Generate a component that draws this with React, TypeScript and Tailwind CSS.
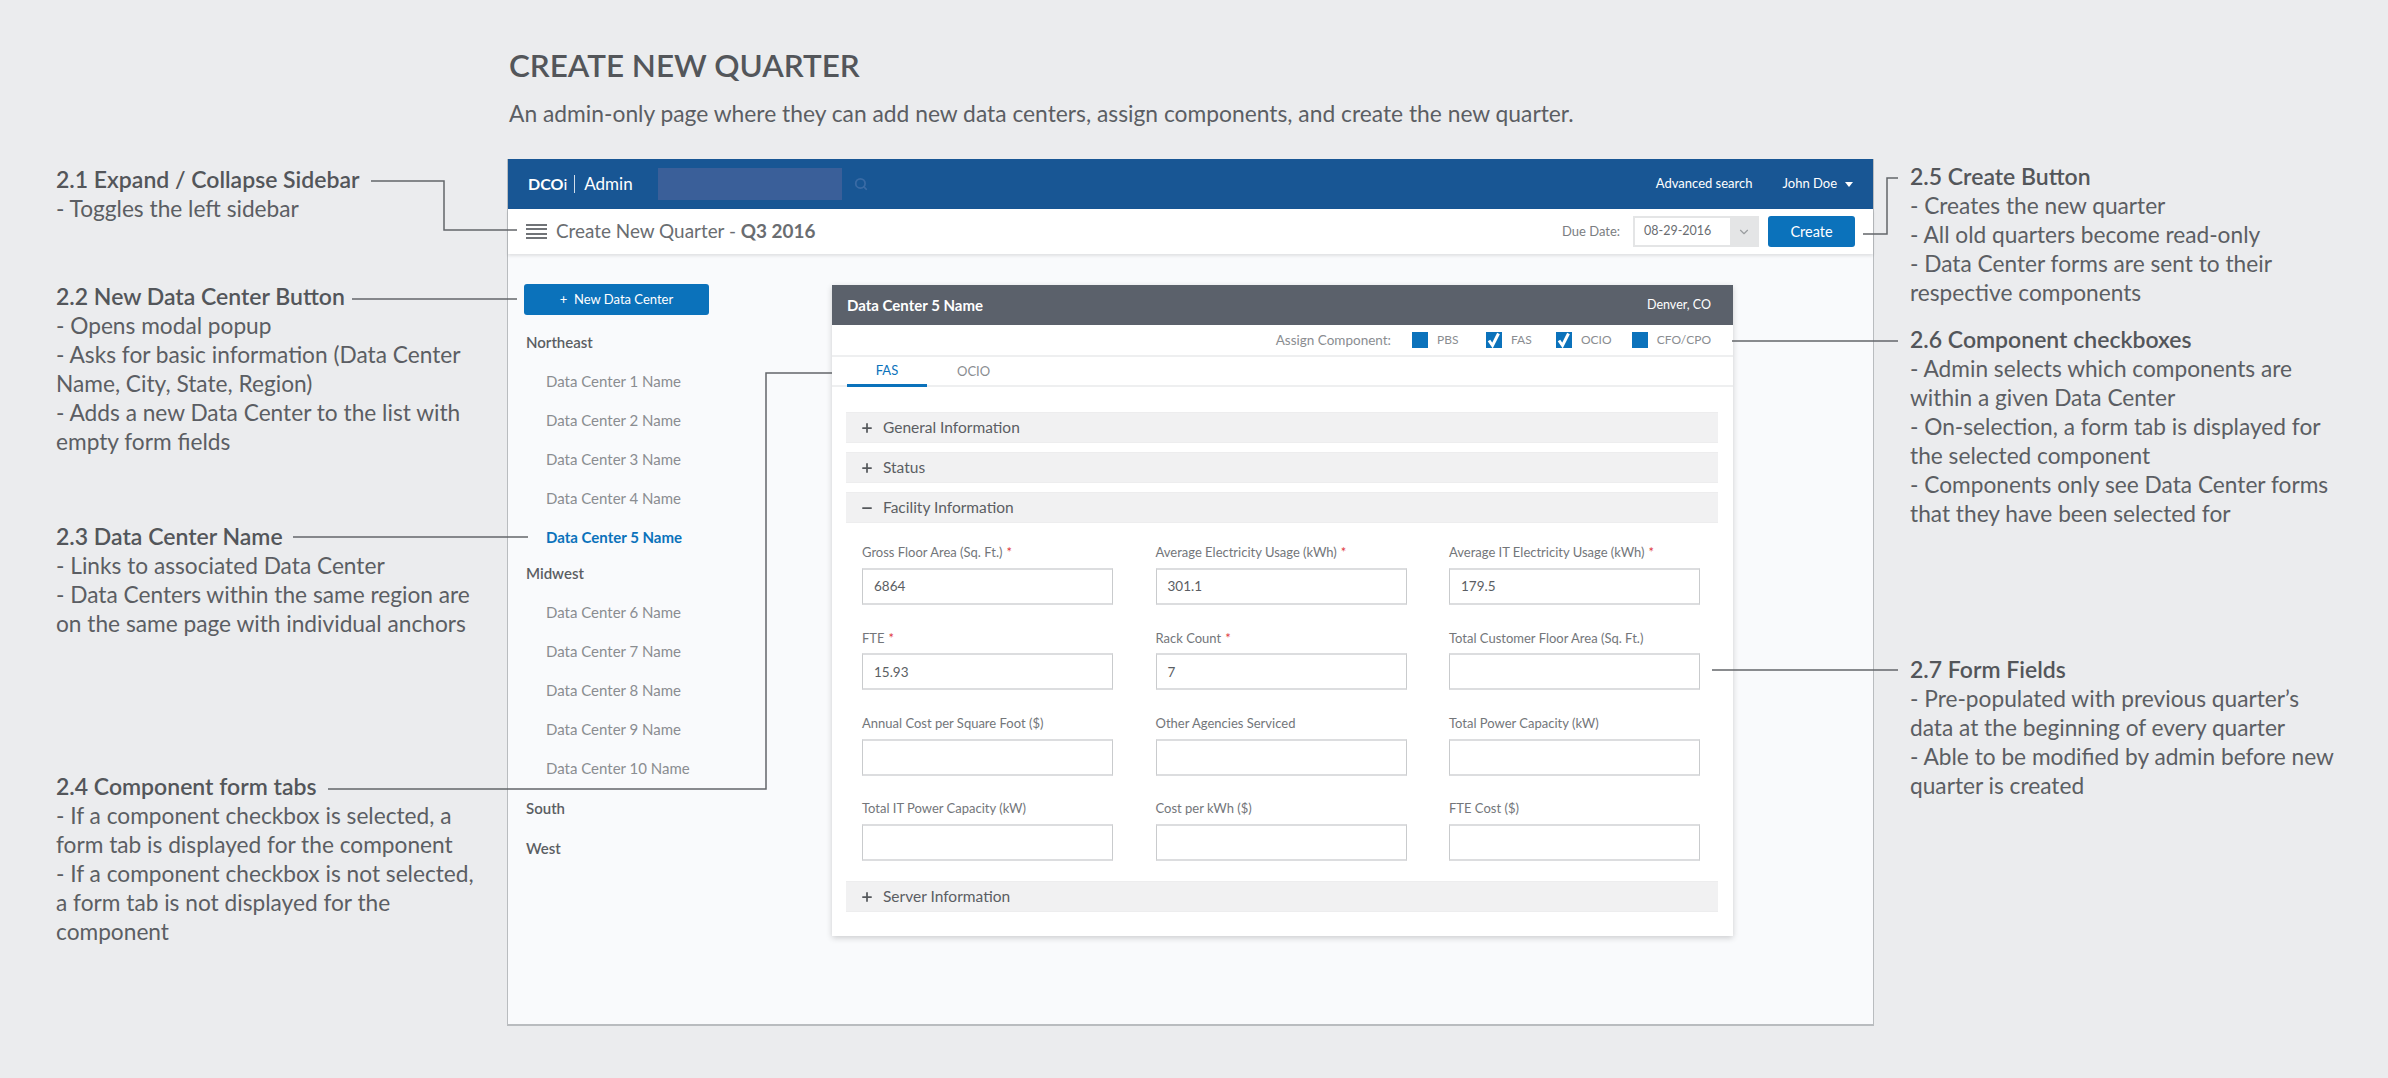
import React from "react";
import { Search, ChevronDown, Plus, Minus } from "lucide-react";

const font = { fontFamily: '"Lato", "Noto Sans", sans-serif' };

function Note({ title, lines, className }: { title: string; lines: string[]; className: string }) {
  return (
    <div className={className}>
      <div className="text-[23px] leading-[29px] font-semibold text-[#53565a] whitespace-nowrap">{title}</div>
      {lines.map((l) => (
        <div key={l} className="text-[22.7px] leading-[29px] text-[#5b5e63] whitespace-nowrap">{l}</div>
      ))}
    </div>
  );
}

function Region({ name, items, active, className = "" }: { name: string; items?: string[]; active?: string; className?: string }) {
  return (
    <div className={className}>
      <div className="h-[39px] pl-[2px] flex items-center text-[15px] font-semibold text-[#5b5e63]">{name}</div>
      {items?.map((i) => (
        <div key={i} className={`h-[39px] pl-[22px] flex items-center text-[15px] ${i === active ? "font-bold text-[#0b72bb]" : "text-[#8a8d91]"}`}>{i}</div>
      ))}
    </div>
  );
}

function Box({ label, checked, className }: { label: string; checked?: boolean; className: string }) {
  return (
    <div className={`flex items-center gap-[9px] ${className}`}>
      <span className="w-[16px] h-[16px] bg-[#0b72bb] flex items-center justify-center">
        {checked && (
          <svg width="16" height="16" viewBox="0 0 16 16" fill="none" stroke="white" strokeWidth="3">
            <path d="M3 8.5L6.5 13.5L12.5 1.5" />
          </svg>
        )}
      </span>
      <span className="text-[#8a8d91] text-[12px]">{label}</span>
    </div>
  );
}

function Bar({ label, open, className = "" }: { label: string; open?: boolean; className?: string }) {
  const Icon = open ? Minus : Plus;
  return (
    <div className={`h-[31px] bg-[#f1f1f2] border-y border-[#ededee] pl-[14px] flex items-center gap-[9px] text-[15.5px] text-[#5b5e63] ${className}`}>
      <Icon size={14} strokeWidth={3} className="text-[#55585c]" />
      {label}
    </div>
  );
}

function Field({ label, req, value }: { label: string; req?: boolean; value?: string }) {
  return (
    <div className="h-[85.3px]">
      <div className="h-[30px] text-[13px] text-[#73767a] flex items-center whitespace-nowrap">
        {label}
        {req && <span className="text-[#e0393e] ml-[4px]">*</span>}
      </div>
      <div className="h-[37px] w-[251px] bg-white border border-[#c9cbcd] border-t-[2px] border-b-[2px] border-t-[#dcdddf] border-b-[#dcdddf] pl-[11px] flex items-center text-[13.5px] text-[#5b5e63]">
        {value}
      </div>
    </div>
  );
}

const fields = [
  { label: "Gross Floor Area (Sq. Ft.)", req: true, value: "6864" },
  { label: "Average Electricity Usage (kWh)", req: true, value: "301.1" },
  { label: "Average IT Electricity Usage (kWh)", req: true, value: "179.5" },
  { label: "FTE", req: true, value: "15.93" },
  { label: "Rack Count", req: true, value: "7" },
  { label: "Total Customer Floor Area (Sq. Ft.)" },
  { label: "Annual Cost per Square Foot ($)" },
  { label: "Other Agencies Serviced" },
  { label: "Total Power Capacity (kW)" },
  { label: "Total IT Power Capacity (kW)" },
  { label: "Cost per kWh ($)" },
  { label: "FTE Cost ($)" },
];

export default function App() {
  return (
    <div style={font} className="relative w-[2388px] h-[1078px] overflow-hidden bg-[#ebecee] flex">
      <div className="w-[507px] pl-[56px] shrink-0">
        <Note className="mt-[165px]" title="2.1 Expand / Collapse Sidebar" lines={["- Toggles the left sidebar"]} />
        <Note className="mt-[59px]" title="2.2 New Data Center Button" lines={["- Opens modal popup", "- Asks for basic information (Data Center", "Name, City, State, Region)", "- Adds a new Data Center to the list with", "empty form fields"]} />
        <Note className="mt-[66px]" title="2.3 Data Center Name" lines={["- Links to associated Data Center", "- Data Centers within the same region are", "on the same page with individual anchors"]} />
        <Note className="mt-[134px]" title="2.4 Component form tabs" lines={["- If a component checkbox is selected, a", "form tab is displayed for the component", "- If a component checkbox is not selected,", "a form tab is not displayed for the", "component"]} />
      </div>

      <div className="w-[1367px] shrink-0">
        <div className="h-[159px] pl-[2px] pt-[43px]">
          <div className="text-[31.4px] leading-[44px] font-semibold text-[#53565a] whitespace-nowrap">CREATE NEW QUARTER</div>
          <div className="mt-[10px] text-[22.8px] leading-[32px] text-[#5b5e63] whitespace-nowrap">An admin-only page where they can add new data centers, assign components, and create the new quarter.</div>
        </div>

        <div className="h-[867px] bg-[#f9fafc] border-x border-b-[2px] border-[#b9bcbf] flex flex-col">
          <div className="h-[50px] bg-[#185694] flex items-center pl-[20px] pr-[20px] text-white shrink-0">
            <span className="text-[16px] font-bold">DCO<span className="font-normal">i</span></span>
            <span className="w-px h-[18px] bg-white/80 ml-[7px] mr-[9px]" />
            <span className="text-[17px]">Admin</span>
            <div className="ml-[25px] w-[184px] h-[32px] bg-[#3a5f99]" />
            <Search size={14} strokeWidth={3} className="ml-[12px] text-[#3a6ba5]" />
            <span className="ml-auto text-[13px]">Advanced search</span>
            <span className="ml-[30px] text-[13px]">John Doe</span>
            <span className="ml-[8px] w-0 h-0 border-x-[4px] border-x-transparent border-t-[5px] border-t-white" />
          </div>

          <div className="h-[45px] bg-white shadow-[0_2px_3px_rgba(0,0,0,0.1)] flex items-center pl-[18px] pr-[18px] shrink-0 relative">
            <div className="w-[21px] flex flex-col gap-[2.5px]">
              <span className="h-[2px] bg-[#707377]" />
              <span className="h-[2px] bg-[#707377]" />
              <span className="h-[2px] bg-[#707377]" />
              <span className="h-[2px] bg-[#707377]" />
            </div>
            <span className="ml-[9px] text-[18.9px] text-[#6a6d71]">Create New Quarter - <span className="font-bold">Q3 2016</span></span>
            <span className="ml-auto text-[13px] text-[#7b7e82]">Due Date:</span>
            <div className="ml-[13px] w-[126px] h-[31px] border-2 border-[#e4e5e6] flex items-stretch bg-white">
              <span className="flex-1 pl-[9px] flex items-center text-[12.5px] text-[#6a6d71]">08-29-2016</span>
              <span className="w-[27px] bg-[#e4e5e6] flex items-center justify-center"><ChevronDown size={14} className="text-[#9a9da0]" /></span>
            </div>
            <span className="ml-[9px] w-[87px] h-[31px] rounded-[3px] bg-[#0b72bb] text-white text-[14.5px] flex items-center justify-center">Create</span>
          </div>

          <div className="flex flex-1">
            <div className="w-[324px] pl-[16px] shrink-0">
              <div className="mt-[30px] w-[185px] h-[31px] rounded-[3px] bg-[#0b72bb] text-white text-[13px] flex items-center justify-center">+&nbsp;&nbsp;New Data Center</div>
              <div className="mt-[8px]">
                <Region name="Northeast" active="Data Center 5 Name" items={["Data Center 1 Name", "Data Center 2 Name", "Data Center 3 Name", "Data Center 4 Name", "Data Center 5 Name"]} />
                <Region name="Midwest" className="-mt-[3px]" items={["Data Center 6 Name", "Data Center 7 Name", "Data Center 8 Name", "Data Center 9 Name", "Data Center 10 Name"]} />
                <Region name="South" className="mt-[1px]" />
                <Region name="West" className="mt-[1px]" />
              </div>
            </div>

            <div className="w-[901px] h-[651px] mt-[31px] bg-white shadow-[0_2px_6px_rgba(0,0,0,0.18)] shrink-0">
              <div className="h-[40px] bg-[#5b616b] flex items-center justify-between pl-[15px] pr-[22px] text-white">
                <span className="text-[15px] font-bold">Data Center 5 Name</span>
                <span className="text-[12.5px]">Denver, CO</span>
              </div>
              <div className="h-[32px] border-b-2 border-[#eeeff0] flex items-center justify-end pr-[22px]">
                <span className="text-[13.5px] text-[#8a8d91] mr-[21px]">Assign Component:</span>
                <Box label="PBS" className="w-[74px]" />
                <Box label="FAS" checked className="w-[70px]" />
                <Box label="OCIO" checked className="w-[76px]" />
                <Box label="CFO/CPO" className="w-[79px]" />
              </div>
              <div className="h-[30px] border-b-2 border-[#eeeff0] flex pl-[15px] text-[13px]">
                <div className="w-[80px] h-[30px] border-b-[3px] border-[#0b72bb] text-[#0b72bb] flex items-center justify-center">FAS</div>
                <div className="ml-[30px] h-[30px] flex items-center text-[#8a8d91]">OCIO</div>
              </div>
              <div className="pl-[14px] pr-[15px] pt-[25px]">
                <Bar label="General Information" />
                <Bar label="Status" className="mt-[9px]" />
                <Bar label="Facility Information" open className="mt-[9px]" />
                <div className="mt-[15px] pl-[16px] grid grid-cols-[251px_251px_251px] gap-x-[42.5px]">
                  {fields.map((f) => (
                    <Field key={f.label} label={f.label} req={f.req} value={f.value} />
                  ))}
                </div>
                <Bar label="Server Information" className="mt-[2px]" />
              </div>
            </div>
          </div>
        </div>
      </div>

      <div className="pl-[36px]">
        <Note className="mt-[162px]" title="2.5 Create Button" lines={["- Creates the new quarter", "- All old quarters become read-only", "- Data Center forms are sent to their", "respective components"]} />
        <Note className="mt-[18px]" title="2.6 Component checkboxes" lines={["- Admin selects which components are", "within a given Data Center", "- On-selection, a form tab is displayed for", "the selected component", "- Components only see Data Center forms", "that they have been selected for"]} />
        <Note className="mt-[127px]" title="2.7 Form Fields" lines={["- Pre-populated with previous quarter’s", "data at the beginning of every quarter", "- Able to be modified by admin before new", "quarter is created"]} />
      </div>

      <svg className="absolute inset-0 pointer-events-none" width="2388" height="1078" fill="none" stroke="#63666a" strokeWidth="1.5">
        <path d="M371 181H444V230H517" />
        <path d="M352 299H517" />
        <path d="M293 537H528" />
        <path d="M328 789H766V373H832" />
        <path d="M1863 234H1887V178H1898" />
        <path d="M1732 341H1898" />
        <path d="M1712 670H1898" />
      </svg>
    </div>
  );
}
